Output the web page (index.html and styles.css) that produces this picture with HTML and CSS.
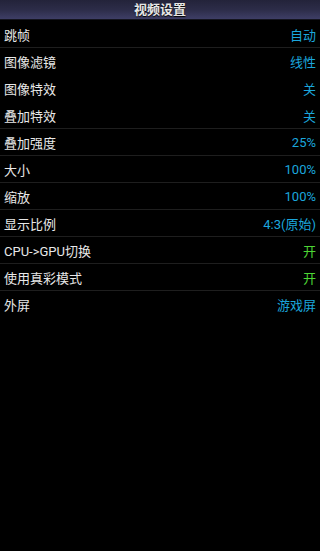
FILE: index.html
```html
<!DOCTYPE html>
<html lang="zh">
<head>
<meta charset="utf-8">
<title>视频设置</title>
<link rel="stylesheet" href="styles.css">
</head>
<body>
<header class="title-bar"><span class="title">视频设置</span></header>
<ul class="list">
  <li class="row"><span class="label">跳帧</span><span class="value">自动</span></li>
  <li class="row no-line"><span class="label">图像滤镜</span><span class="value">线性</span></li>
  <li class="row no-line"><span class="label">图像特效</span><span class="value">关</span></li>
  <li class="row"><span class="label">叠加特效</span><span class="value">关</span></li>
  <li class="row"><span class="label">叠加强度</span><span class="value">25%</span></li>
  <li class="row"><span class="label">大小</span><span class="value">100%</span></li>
  <li class="row"><span class="label">缩放</span><span class="value">100%</span></li>
  <li class="row"><span class="label">显示比例</span><span class="value">4:3(原始)</span></li>
  <li class="row"><span class="label">CPU-&gt;GPU切换</span><span class="value on">开</span></li>
  <li class="row"><span class="label">使用真彩模式</span><span class="value on">开</span></li>
  <li class="row no-line"><span class="label">外屏</span><span class="value">游戏屏</span></li>
</ul>
</body>
</html>
```
FILE: styles.css
```css
html, body {
  margin: 0;
  padding: 0;
  background: #000;
  width: 320px;
  height: 551px;
  overflow: hidden;
  font-family: Roboto, "Noto Sans CJK SC", sans-serif;
}
.title-bar {
  height: 19px;
  background: linear-gradient(#23233a, #2c2c48 50%, #3e3e66);
  border-bottom: 1px solid #14141e;
  display: flex;
  align-items: center;
  justify-content: center;
}
.title {
  color: #e6e6e6;
  font-size: 13px;
  font-weight: bold;
  text-shadow: 0 1px 1px #000;
  line-height: 19px;
}
.list {
  list-style: none;
  margin: 1px 0 0;
  padding: 0;
}
.row {
  height: 26px;
  border-bottom: 1px solid #1e1e1e;
  display: flex;
  align-items: center;
  justify-content: space-between;
  padding: 0 4px 0 4px;
  font-size: 13px;
}
.row.no-line {
  border-bottom-color: #000;
}
.label {
  color: #e8e8e8;
}
.value {
  color: #1ba6dc;
}
.value.on {
  color: #4dd535;
}
```
